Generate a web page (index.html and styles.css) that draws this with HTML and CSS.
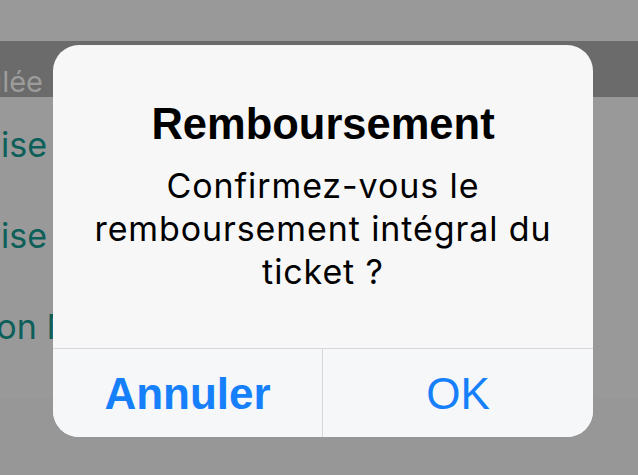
FILE: index.html
```html
<!DOCTYPE html>
<html lang="fr">
<head>
<meta charset="utf-8">
<title>Remboursement</title>
<link rel="stylesheet" href="styles.css">
</head>
<body>
<div class="screen">
  <div class="page">
    <div class="topbar"></div>
    <div class="header"><span class="clip"><span class="header-text">Annulée</span></span></div>
    <div class="list">
      <div class="row"><span class="clip"><span class="row-text">Remise</span></span></div>
      <div class="row"><span class="clip"><span class="row-text">Devise</span></span></div>
      <div class="row"><span class="clip"><span class="row-text row-text-last">Édition N</span></span></div>
    </div>
  </div>
  <div class="alert" role="alertdialog">
    <div class="alert-body">
      <div class="alert-title">Remboursement</div>
      <div class="alert-message">Confirmez-vous le remboursement intégral du ticket ?</div>
    </div>
    <div class="alert-actions">
      <button class="btn btn-cancel">Annuler</button>
      <button class="btn btn-ok">OK</button>
    </div>
  </div>
</div>
</body>
</html>
```
FILE: styles.css
```css
html, body {
  margin: 0;
  padding: 0;
}
body {
  width: 638px;
  height: 475px;
  overflow: hidden;
  background: #979797;
  font-family: "Liberation Sans", Arial, sans-serif;
}
.screen {
  position: relative;
  width: 638px;
  height: 475px;
  overflow: hidden;
}
.page {
  display: flex;
  flex-direction: column;
}
.topbar {
  height: 41px;
  background: #999999;
}
.header {
  height: 56px;
  background: #6b6b6b;
  display: flex;
  align-items: flex-start;
}
.clip {
  display: flex;
  justify-content: flex-end;
  overflow: hidden;
  white-space: nowrap;
}
.header .clip {
  width: 43px;
  padding-top: 24px;
}
.header-text {
  font-family: "Inter", "Liberation Sans", sans-serif;
  font-size: 29px;
  line-height: 34px;
  color: #9c9c9c;
}
.list {
  display: flex;
  flex-direction: column;
  padding-top: 28px;
  background: #999999;
}
.row {
  height: 91px;
  display: flex;
  align-items: flex-start;
}
.row .clip {
  width: 60px;
}
.row-text {
  font-family: "Inter", "Liberation Sans", sans-serif;
  font-size: 34px;
  line-height: 40px;
  color: #0d5f59;
  padding-right: 13px;
}
.row-text-last {
  padding-right: 0;
  margin-right: -12px;
}
.alert {
  position: absolute;
  left: 53px;
  top: 45px;
  width: 540px;
  height: 392px;
  border-radius: 26px;
  background: #f7f7f8;
  overflow: hidden;
  display: flex;
  flex-direction: column;
}
.alert-body {
  height: 303px;
  padding-top: 53px;
  box-sizing: border-box;
  text-align: center;
  display: flex;
  flex-direction: column;
  align-items: center;
}
.alert-title {
  font-family: "Liberation Sans", Arial, sans-serif;
  font-weight: 700;
  font-size: 43.5px;
  line-height: 52px;
  color: #000;
}
.alert-message {
  margin-top: 14px;
  width: 500px;
  font-family: "Inter", "Liberation Sans", sans-serif;
  font-size: 34px;
  letter-spacing: 0.9px;
  line-height: 43px;
  color: #000;
}
.alert-actions {
  flex: 1;
  display: flex;
  border-top: 1px solid #d7d7db;
  background: #f6f7f8;
}
.btn {
  flex: 1;
  margin: 0;
  padding: 2px 0 0 0;
  border: 0;
  background: transparent;
  font-family: "Liberation Sans", Arial, sans-serif;
  font-size: 44px;
  line-height: 86px;
  color: #1580fa;
}
.btn-cancel {
  flex: 0 0 270px;
  font-weight: 700;
  border-right: 1px solid #d7d7db;
}
.btn-ok {
  font-weight: 400;
}
```
